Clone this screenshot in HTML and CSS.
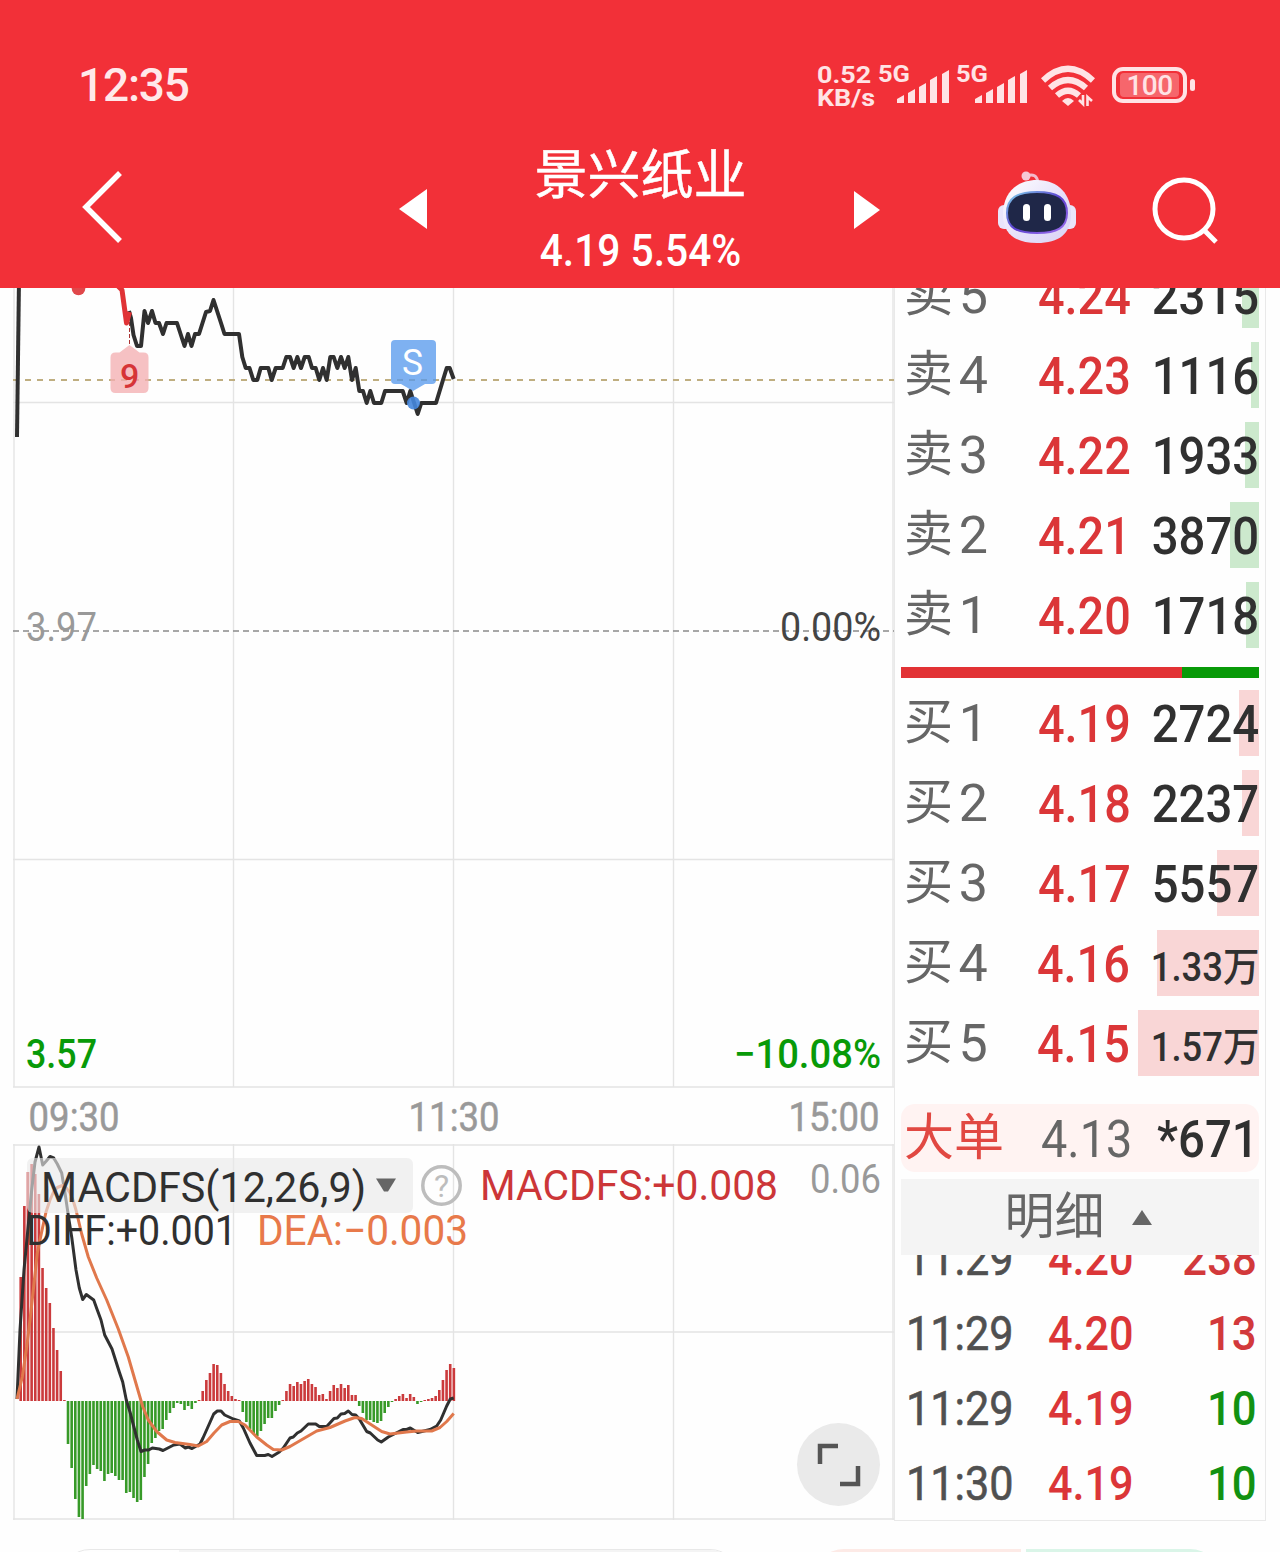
FILE: index.html
```
<!DOCTYPE html>
<html lang="zh-CN">
<head>
    <meta charset="UTF-8">
    <meta name="viewport" content="width=device-width, initial-scale=1.0">
    <title>景兴纸业</title>
    <link rel="stylesheet" href="styles.css">
</head>
<body>
    <header class="header">
        <div class="status-bar">
            <div class="clock">12:35</div>
            <div class="net-speed"><span>0.52</span><span>KB/s</span></div>
            <svg class="signal" width="72" height="44" viewBox="0 0 72 44">
                <text x="0" y="20" textLength="32" lengthAdjust="spacingAndGlyphs">5G</text>
                <path d="M19 41v-4l7-4v8zM30 41V31l7-4v14zM41 41V25l7-4v20zM52 41V18l7-4v27zM64 41V12l7-4v33z"/>
            </svg>
            <svg class="signal second" width="72" height="44" viewBox="0 0 72 44">
                <text x="0" y="20" textLength="32" lengthAdjust="spacingAndGlyphs">5G</text>
                <path d="M19 41v-4l7-4v8zM30 41V31l7-4v14zM41 41V25l7-4v20zM52 41V18l7-4v27zM64 41V12l7-4v33z"/>
            </svg>
            <svg class="wifi" width="54" height="42" viewBox="0 0 54 42">
                <g fill="none" stroke="#ffe3e5" stroke-width="6.200">
                    <path d="M2 15.500Q27-8 52 15.500"/>
                    <path d="M9 23Q27 7 45 23"/>
                    <path d="M16 30.500Q27 21 38 30.500"/>
                </g>
                <path d="M21 36q6-6 12 0l-6 5z" fill="#ffe3e5"/>
                <path d="M42 30v9l-4-4M46.500 41v-9l4.500 4" fill="none" stroke="#ffe3e5" stroke-width="2.600"/>
            </svg>
            <div class="battery"><span>100</span></div>
        </div>
        <div class="nav">
            <svg class="back" width="44" height="74" viewBox="0 0 44 74">
                <path d="M40 3L6 37l34 34" fill="none" stroke="#fff" stroke-width="5.500"/>
            </svg>
            <svg class="prev" width="29" height="42" viewBox="0 0 29 42"><path d="M28 1v40L0 21z" fill="#fff"/></svg>
            <div class="title">
                <h1>景兴纸业</h1>
                <p>4.19 5.54%</p>
            </div>
            <svg class="next" width="27" height="40" viewBox="0 0 27 40"><path d="M1 1v38l26-19z" fill="#fff"/></svg>
            <svg class="robot" width="80" height="76" viewBox="0 0 80 76">
                <defs>
                    <linearGradient id="shell" x1="0" y1="0" x2="1" y2="1">
                        <stop offset="0" stop-color="#fff"/>
                        <stop offset=".55" stop-color="#e6e0fa"/>
                        <stop offset="1" stop-color="#d9d4f4"/>
                    </linearGradient>
                    <linearGradient id="rim" x1="0" y1="0" x2="1" y2="1">
                        <stop offset="0" stop-color="#7fd5ea"/>
                        <stop offset=".5" stop-color="#5b3fd0"/>
                        <stop offset="1" stop-color="#a070ee"/>
                    </linearGradient>
                </defs>
                <path d="M29 8q11-4 12 7" fill="none" stroke="#f3b9cb" stroke-width="3"/>
                <circle cx="29" cy="8" r="4.500" fill="#f6c9d6"/>
                <rect x="1" y="37" width="78" height="24" rx="6" fill="#e9e5fb"/>
                <path d="M40 12c22 0 34 15 34 34 0 20-12 29-34 29S6 66 6 46c0-19 12-34 34-34z" fill="url(#shell)"/>
                <path d="M40 24c20 0 30 6 30 21s-10 20-30 20-30-5-30-20 10-21 30-21z" fill="#1f2748" stroke="url(#rim)" stroke-width="2"/>
                <rect x="26" y="36" width="7" height="17" rx="3.500" fill="#fff"/>
                <rect x="47" y="36" width="7" height="17" rx="3.500" fill="#fff"/>
            </svg>
            <svg class="search" width="68" height="68" viewBox="0 0 68 68">
                <g fill="none" stroke="#fff" stroke-width="5">
                    <circle cx="33" cy="33" r="29"/>
                    <path d="M52 53l13 13"/>
                </g>
            </svg>
        </div>
    </header>

    <main class="main">
        <section class="charts">
            <svg class="price-chart" width="894" height="800" viewBox="0 288 894 800">
                <g class="grid">
                    <path d="M14 288v799M233.500 288v799M453.500 288v799M673.500 288v799M893 288v799"/>
                    <path d="M13 402.500h881M13 859.500h881M13 1087h881"/>
                </g>
                <path d="M13 380h881" class="dash gold"/>
                <path d="M13 631h881" class="dash"/>
                <path d="M17 437L19 280" class="price"/>
                <path d="M129.500 322v24" class="marker-line"/>
                <polyline class="price" points="129,311 131,318 133.500,335 137,346 141,346 144.500,311 148,323 152,311 155.500,323 159,323 163,334 166.500,323 177,323 184.500,346 188,334 191.500,346 195,334 199,334 206,312 210,311 213.500,300 221,323 224.500,334 239,334 242.300,357 245.700,368 249.500,368 253.300,380 257.300,380 260.700,368 268.300,368 271.700,380 275.700,368 282.700,368 286.300,357 290,357 293.700,368 297.300,357 301,368 304.700,357 308.700,357 312,368 315.700,368 319.300,380 323,368 326.700,380 330.300,357 333.700,357 337.300,368 341,357 344.700,368 348.300,357 352,380 355.700,368 359.300,391 363,391 366.700,403 370.300,391 374,403 381.300,403 385,391 402.700,391 406.700,403 410.300,391 417.700,414 421.300,403 436,403 443.300,379 446.700,368 449.700,368 453.700,379"/>
                <path class="price hot" d="M118 286l4 4 4.500 33 3-11"/>
                <circle cx="78.500" cy="288.500" r="6.800" fill="#e0474a"/>

                <path d="M129.500 345l10 7.500h4q5 0 5 5V388q0 5-5 5h-28q-5 0-5-5v-30.500q0-5 5-5h4z" fill="#f4b0b2" fill-opacity=".78"/>
                <text class="marker" x="120" y="388">9</text>

                <path d="M395 340h37q4 0 4 4v36q0 4-4 4h-7l-12 7-12-7h-6q-4 0-4-4v-36q0-4 4-4z" fill="#5599ec" fill-opacity=".76"/>
                <text class="marker sell" x="402" y="375" textLength="21" lengthAdjust="spacingAndGlyphs">S</text>
                <circle cx="413.500" cy="403" r="6.500" fill="#4687dd" fill-opacity=".9"/>

                <text class="tag" x="26" y="641" textLength="71" lengthAdjust="spacingAndGlyphs">3.97</text>
                <text class="tag dark" x="780" y="641" textLength="101" lengthAdjust="spacingAndGlyphs">0.00%</text>
                <text class="tag down" x="26" y="1068" textLength="71" lengthAdjust="spacingAndGlyphs">3.57</text>
                <text class="tag down" x="734" y="1068" textLength="147" lengthAdjust="spacingAndGlyphs">−10.08%</text>
            </svg>
            <div class="time-axis">
                <span>09:30</span><span>11:30</span><span>15:00</span>
            </div>
            <div class="macd">
                <svg width="894" height="376" viewBox="0 1144 894 376">
                    <g class="grid">
                        <path d="M14 1144v376M233.500 1144v376M453.500 1144v376M673.500 1144v376M893 1144v376"/>
                        <path d="M13 1145h881M13 1332h881M13 1519h881"/>
                    </g>
                    <g id="bars"></g>
                    <polyline class="diff" points="17,1399 20,1330 24,1270 28.500,1223 31.700,1190 35,1162 39,1147 42.700,1165 46.300,1161 50,1156.500 53.700,1158 57.300,1164 61.700,1173 65,1193 69,1220 71.700,1237 76,1270 79.300,1288 82.700,1299.500 86.300,1294.500 93.700,1300 97.300,1310 101,1320 104.700,1335 112,1349 119.300,1372 122.700,1382 126.300,1400 130,1412 137.300,1440 141,1451.500 144.700,1450 148.700,1450 152.300,1448 159.300,1449 163,1450.500 173.700,1445 180,1444 185.300,1448 188.300,1447 192,1448.500 200,1444 203,1438 213.700,1414 217.300,1411 221,1411 224.700,1415 233.300,1419 239.300,1421 243.300,1428 250,1443 256.700,1455.500 264.700,1455.500 268.300,1454.500 272,1456.500 279.300,1452 283.300,1448 290,1438 293.300,1437 297.300,1433 301,1431 308.300,1424 315.700,1424 319.300,1426.500 326.700,1426.500 334,1418.500 337.300,1418 341,1414 344.700,1413.500 348.300,1411 352,1414.500 355.700,1415 359.300,1419 366.700,1431.500 370.300,1433 377.700,1440 381.300,1442 388.300,1437 403,1429.500 406.700,1429.500 410.300,1428 417.700,1432.500 430,1429.500 436.700,1426 440.700,1420 446.700,1406 450.300,1399 453.700,1398"/>
                    <polyline class="dea" points="17,1399 22.300,1377 26.700,1347 30,1320 33.300,1290 37.300,1253 42.700,1227 46,1212 50,1200 53.500,1192 57.300,1187.500 62.300,1185.500 66.500,1188 70,1193 73,1200 76,1210 81.700,1234 88.300,1257 96.700,1278 106.700,1300 118.300,1329 128.300,1357 137.300,1388 142.700,1406.500 148.300,1420 156.700,1431.500 166.700,1440 175,1442.500 190,1444.500 198.300,1446 206.700,1441.500 214,1433 221.700,1425 230,1421.500 238.300,1421.500 245,1425 256.700,1437 266.700,1445 273.300,1449.500 281.700,1450 290,1446.500 316.700,1431 330,1427.500 345,1421 355,1417.500 361.700,1418.500 381.700,1431.500 390,1434 406.700,1432 416.700,1431 431.700,1431 440,1427.500 446.700,1421.500 453.700,1413.500"/>
                    <rect x="27" y="1158" width="386" height="55" rx="6" fill="#e9e9e9" fill-opacity=".62"/>
                    <text class="legend" x="41" y="1202" textLength="325" lengthAdjust="spacingAndGlyphs">MACDFS(12,26,9)</text>
                    <path d="M376 1178.500h20l-8 13h-4z" fill="#666"/>
                    <circle cx="441.500" cy="1185.500" r="18.700" fill="none" stroke="#bdbdbd" stroke-width="3.500"/>
                    <text class="help" x="434" y="1197">?</text>
                    <text class="legend red" x="480" y="1200" textLength="298" lengthAdjust="spacingAndGlyphs">MACDFS:+0.008</text>
                    <text class="legend" x="26" y="1245" textLength="211" lengthAdjust="spacingAndGlyphs">DIFF:+0.001</text>
                    <text class="legend orange" x="257" y="1245" textLength="211" lengthAdjust="spacingAndGlyphs">DEA:−0.003</text>
                    <text class="tag axis" x="810" y="1193" textLength="71" lengthAdjust="spacingAndGlyphs">0.06</text>
                </svg>
                <button class="expand">
                    <svg width="44" height="44" viewBox="0 0 44 44"><path d="M3 21V3h18M41 23v18H23" fill="none" stroke="#555" stroke-width="4.500"/></svg>
                </button>
            </div>
        </section>

        <aside class="panel">
            <ul class="book sell-side">
                <li><b>卖</b><i>5</i><em>4.24</em><span>2315</span><s style="width:17px"></s></li>
                <li><b>卖</b><i>4</i><em>4.23</em><span>1116</span><s style="width:8px"></s></li>
                <li><b>卖</b><i>3</i><em>4.22</em><span>1933</span><s style="width:14px"></s></li>
                <li><b>卖</b><i>2</i><em>4.21</em><span>3870</span><s style="width:29px"></s></li>
                <li><b>卖</b><i>1</i><em>4.20</em><span>1718</span><s style="width:13px"></s></li>
            </ul>
            <div class="ratio"><div style="width:78.400%"></div></div>
            <ul class="book buy-side">
                <li><b>买</b><i>1</i><em>4.19</em><span>2724</span><s style="width:20px"></s></li>
                <li><b>买</b><i>2</i><em>4.18</em><span>2237</span><s style="width:17px"></s></li>
                <li><b>买</b><i>3</i><em>4.17</em><span>5557</span><s style="width:42px"></s></li>
                <li><b>买</b><i>4</i><em>4.16</em><span class="wan">1.33万</span><s style="width:102px"></s></li>
                <li><b>买</b><i>5</i><em>4.15</em><span class="wan">1.57万</span><s style="width:121px"></s></li>
            </ul>
            <div class="big-order"><b>大单</b><em>4.13</em><span>*671</span></div>
            <div class="detail-tab">明细<svg width="20" height="15" viewBox="0 0 20 15"><path d="M10 0l10 15H0z" fill="#666"/></svg></div>
            <ul class="ticks">
                <li><b>11:29</b><em>4.20</em><span class="up">238</span></li>
                <li><b>11:29</b><em>4.20</em><span class="up">13</span></li>
                <li><b>11:29</b><em>4.19</em><span>10</span></li>
                <li><b>11:30</b><em>4.19</em><span>10</span></li>
            </ul>
        </aside>
    </main>

    <footer class="footer">
        <div class="index-box"><div></div></div>
        <div class="buy-btn"></div>
        <div class="sell-btn"></div>
    </footer>

    <script>
        // macd histogram, one value per minute
        var values = [0, 124, 195, 229, 237, 227, 207, 133, 113, 98, 73, 51, 30, 1,
            -43, -67, -98, -116, -118, -85, -73, -64, -68, -70, -80, -73, -72, -75, -79, -79,
            -92, -91, -97, -101, -99, -76, -63, -42, -37, -30, -28, -19, -12, -7, -2, -3, -9, -5, -8, -2,
            1, 10, 21, 28, 37, 36, 28, 17, 10, 5, 2, 1, -11, -21, -28, -33, -35, -30, -23, -17, -17, -10, -4,
            1, 10, 17, 15, 19, 17, 20, 22, 17, 14, 6, 7, 2, 10, 16, 13, 17, 13, 16, 6, 6,
            -5, -12, -19, -19, -21, -22, -20, -12, -6, -1, 2, 5, 7, 3, 7, 4, -3, -1,
            1, 2, 3, 5, 11, 21, 31, 37, 33];
        var zero = 1401;
        var bars = document.getElementById("bars");
        for(var i = 0; i < values.length; i++){
            var v = values[i];
            var bar = document.createElementNS("http://www.w3.org/2000/svg", "rect");
            bar.setAttribute("x", (17.06 + i * 3.64 - 1.3).toFixed(2));
            bar.setAttribute("y", v > 0 ? zero - v : zero);
            bar.setAttribute("width", 2.6);
            bar.setAttribute("height", Math.abs(v));
            bar.setAttribute("fill", v > 0 ? "#cb3a3c" : "#379a28");
            bars.appendChild(bar);
        }
    </script>
</body>
</html>
```
FILE: styles.css
```
*{
    box-sizing: border-box;
}
body{
    margin:0;
    width:1280px;
    height:1552px;
    overflow: hidden;
    background-color: #fefefe;
    font-family: Roboto, "Noto Sans CJK SC", sans-serif;
}
h1, p, ul{
    margin:0;
    padding:0;
    list-style: none;
}
b, i, em, s{
    font-style: normal;
    font-weight: 400;
    text-decoration: none;
}
svg{
    display:block;
    flex:none;
}

/* header */
.header{
    height:288px;
    background-color: #f23038;
    color:white;
}
.status-bar{
    height:130px;
    padding:62px 93px 0 78px;
    display:flex;
    align-items: flex-start;
}
.clock{
    flex:1;
    font-size: 46px;
    font-weight: 500;
    line-height: 46px;
    letter-spacing: -1.2px;
    color:#ffe9ea;
}
.net-speed{
    width:61px;
    display:flex;
    flex-direction: column;
    font-size: 24px;
    font-weight: 700;
    line-height: 23px;
    padding-top:2px;
    color:#ffe3e5;
    transform:scaleX(1.12);
    transform-origin:left;
}
.signal{
    overflow: visible;
    fill:#ffe3e5;
    font-size: 24px;
    font-weight: 700;
}
.signal.second{
    margin-left:6px;
}
.wifi{
    margin:3px 0 0 13px;
}
.battery{
    position:relative;
    margin:5px 0 0 17px;
    width:75px;
    height:36px;
    border:4px solid #ffe3e5;
    border-radius: 11px;
    padding:2px 4px;
}
.battery span{
    display:block;
    height:24px;
    border-radius: 4px;
    background-color: #f6666c;
    color:#ffe3e5;
    font-size: 28px;
    font-weight: 500;
    line-height: 25px;
    text-align: center;
    letter-spacing: -0.5px;
}
.battery::after{
    content:"";
    position:absolute;
    right:-12px;
    top:8px;
    width:5px;
    height:12px;
    border-radius: 3px;
    background-color: #ffe3e5;
}
.nav{
    height:158px;
    padding-left:80px;
    display:flex;
    align-items: flex-start;
}
.back{
    margin-top:40px;
}
.prev{
    margin:58px 0 0 275px;
}
.title{
    flex:1;
    text-align: center;
    padding-top:16px;
}
.title h1{
    font-size: 53px;
    font-weight: 400;
    line-height: 60px;
    -webkit-text-stroke: 0.5px white;
}
.title p{
    margin-top:21px;
    font-size: 45px;
    font-weight: 500;
    line-height: 48px;
    transform:scaleX(.905);
}
.next{
    margin-top:60px;
}
.robot{
    margin:38px 0 0 117px;
}
.search{
    margin:46px 61px 0 74px;
}

/* charts */
.main{
    height:1233px;
    overflow: hidden;
    display:flex;
}
.charts{
    width:894px;
}
.grid path{
    fill:none;
    stroke:#e4e4e4;
    stroke-width:1.4;
}
.dash{
    stroke:#8a8a8a;
    stroke-width:1.6;
    stroke-dasharray:6 4;
}
.dash.gold{
    stroke:#bfae80;
    stroke-width:2;
    stroke-dasharray:6 6;
}
.price{
    fill:none;
    stroke:#303030;
    stroke-width:4;
    stroke-linejoin:round;
}
.price.hot{
    stroke:#e03336;
    stroke-width:5;
}
.marker-line{
    stroke:#a33;
    stroke-dasharray:4 2;
}
.marker{
    font-size: 34px;
    font-weight: 500;
    fill:#d63437;
}
.marker.sell{
    font-size: 36px;
    font-weight: 400;
    fill:white;
}
.tag{
    font-size: 40px;
    font-weight: 400;
    fill:#999;
}
.tag.dark{
    fill:#444;
}
.tag.down{
    font-weight: 500;
    fill:#089a08;
}
.time-axis{
    height:56px;
    padding:0 9px 0 23px;
    display:flex;
    justify-content: space-between;
    font-size: 41px;
    line-height: 58px;
    color:#999;
}
.time-axis span{
    transform:scaleX(.89);
    -webkit-text-stroke: 0.5px #999;
}
.macd{
    position:relative;
}
.diff, .dea{
    fill:none;
    stroke:#303030;
    stroke-width:3;
    stroke-linejoin:round;
}
.dea{
    stroke:#e0784c;
}
.legend{
    font-size: 42px;
    fill:#303030;
}
.legend.red{
    fill:#cc3638;
}
.legend.orange{
    fill:#e8794a;
}
.help{
    font-size: 32px;
    fill:#bdbdbd;
}
.expand{
    position:absolute;
    right:14px;
    bottom:14px;
    width:83px;
    height:83px;
    padding:0;
    border:none;
    border-radius: 50%;
    background-color: #eaeaea;
    display:flex;
    justify-content: center;
    align-items: center;
}

/* order book */
.panel{
    width:372px;
    padding:0 6px;
    border:1px solid #e9e9e9;
    border-top:none;
}
.book li, .big-order, .ticks li{
    position:relative;
    display:flex;
    align-items: center;
    white-space: nowrap;
}
.book li{
    height:80px;
    padding-top:3px;
    font-size: 52px;
    line-height: 66px;
}
.sell-side{
    margin-top:-33px;
}
.book b{
    width:60px;
    padding:0 0 4px 3px;
    font-size: 49px;
    color:#666;
}
.book i{
    width:83px;
    font-size: 52px;
    color:#666;
    padding-bottom:2px;
}
.book em, .big-order em, .ticks em{
    flex:1;
    font-weight: 500;
    color:#db3638;
    transform:scaleX(.9);
    transform-origin:left;
}
.book span, .big-order span, .ticks span, .ticks b{
    font-weight: 500;
    color:#303030;
    transform:scaleX(.91);
    transform-origin:right;
}
.book em{
    margin-left:-1px;
}
.book .wan{
    font-size: 40px;
    padding-top:7px;
}
.book s{
    position:absolute;
    right:0;
    top:7px;
    height:66px;
    z-index: -1;
    background-color: #cce9cd;
}
.buy-side s{
    background-color: #f9d6d6;
}
.ratio{
    margin:12px 0 5px;
    height:11px;
    background-color: #089a08;
}
.ratio div{
    height:11px;
    background-color: #e23235;
}
.big-order{
    margin-top:21px;
    height:68px;
    padding-top:3px;
    border-radius: 14px;
    background-color: #fff3f2;
    font-size: 52px;
    line-height: 65px;
}
.big-order b{
    width:140px;
    padding:0 0 3px 3px;
    font-size: 50px;
    color:#e14842;
}
.big-order em{
    font-weight: 400;
    color:#666;
}
.detail-tab{
    position:relative;
    z-index: 1;
    margin-top:7px;
    height:76px;
    padding-right:4px;
    display:flex;
    justify-content: center;
    align-items: center;
    gap:27px;
    background-color: #f4f4f4;
    color:#666;
    font-size: 50px;
    line-height: 76px;
}
.ticks{
    margin-top:-34px;
}
.ticks li{
    height:75px;
    padding:0 2px 0 5px;
    font-size: 48px;
}
.ticks b{
    width:142px;
    font-weight: 400;
    color:#505050;
    transform:scaleX(.9);
    transform-origin:left;
    -webkit-text-stroke: 0.6px #505050;
}
.ticks span{
    color:#129212;
}
.ticks .up{
    color:#d2393b;
}

/* tops of the bottom bar buttons */
.footer{
    padding:28px 0 0 60px;
    display:flex;
}
.index-box{
    width:680px;
    height:60px;
    padding-left:118px;
    border:1.5px solid #e8e8e8;
    border-radius: 30px;
    overflow: hidden;
}
.index-box div{
    height:60px;
    background-color: #f4f4f4;
}
.buy-btn, .sell-btn{
    height:60px;
    margin-left:74px;
    width:207px;
    border-radius: 30px 0 0 30px;
    background-color: #fdeae6;
}
.sell-btn{
    margin-left:5px;
    width:194px;
    border-radius: 0 30px 30px 0;
    background-color: #daf5e8;
}
```
